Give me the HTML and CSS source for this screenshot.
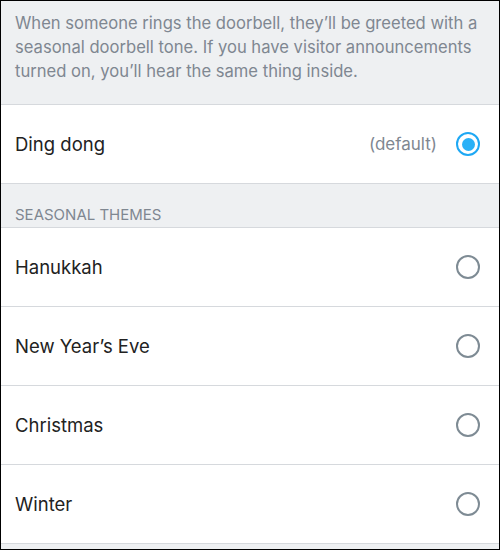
FILE: index.html
```html
<!DOCTYPE html>
<html lang="en">
<head>
    <meta charset="UTF-8">
    <meta name="viewport" content="width=device-width, initial-scale=1.0">
    <title>Doorbell Tones</title>
    <link rel="stylesheet" href="styles.css">
</head>
<body>

    <div class="screen">
        <p class="intro">When someone rings the doorbell, they’ll be greeted with a seasonal doorbell tone. If you have visitor announcements turned on, you’ll hear the same thing inside.</p>

        <div class="list">
            <label class="row">
                <span class="row-name">Ding dong</span>
                <span class="row-note">(default)</span>
                <span class="radio radio-on"></span>
            </label>
        </div>

        <div class="section-title">Seasonal Themes</div>

        <div class="list">
            <label class="row">
                <span class="row-name">Hanukkah</span>
                <span class="radio"></span>
            </label>
            <label class="row">
                <span class="row-name">New Year’s Eve</span>
                <span class="radio"></span>
            </label>
            <label class="row">
                <span class="row-name">Christmas</span>
                <span class="radio"></span>
            </label>
            <label class="row">
                <span class="row-name">Winter</span>
                <span class="radio"></span>
            </label>
        </div>
    </div>

</body>
</html>
```

FILE: styles.css
```css
html, body {
    margin: 0;
    padding: 0;
}
body {
    font-family: Inter, "Open Sans", sans-serif;
    background-color: #eef0f2;
}
.screen {
    width: 500px;
    height: 550px;
    box-sizing: border-box;
    border: 1px solid #000;
    background-color: #eef0f2;
    overflow: hidden;
}
.intro {
    margin: 0;
    padding: 10px 8px 21px 14px;
    font-size: 16.6px;
    line-height: 24px;
    color: #7f8791;
}
.list {
    background: white;
    border-top: 1px solid #d6d9dd;
    border-bottom: 1px solid #d6d9dd;
}
.row {
    display: flex;
    align-items: center;
    height: 78px;
    padding: 0 19px 0 14px;
    border-top: 1px solid #d6d9dd;
}
.row:first-child {
    border-top: none;
}
.row-name {
    flex: 1;
    font-size: 18.5px;
    color: #222;
}
.row-note {
    font-size: 17px;
    color: #7f8791;
    margin-right: 19px;
}
.radio {
    width: 24px;
    height: 24px;
    box-sizing: border-box;
    border: 2px solid #7e8b94;
    border-radius: 50%;
    display: flex;
    align-items: center;
    justify-content: center;
}
.radio-on {
    border: 2.5px solid #1ea8f4;
}
.radio-on::after {
    content: "";
    width: 13px;
    height: 13px;
    border-radius: 50%;
    background: #2ab1f7;
}
.section-title {
    height: 43px;
    box-sizing: border-box;
    padding: 21px 14px 0 14px;
    font-size: 15px;
    text-transform: uppercase;
    color: #7f8791;
}
```
